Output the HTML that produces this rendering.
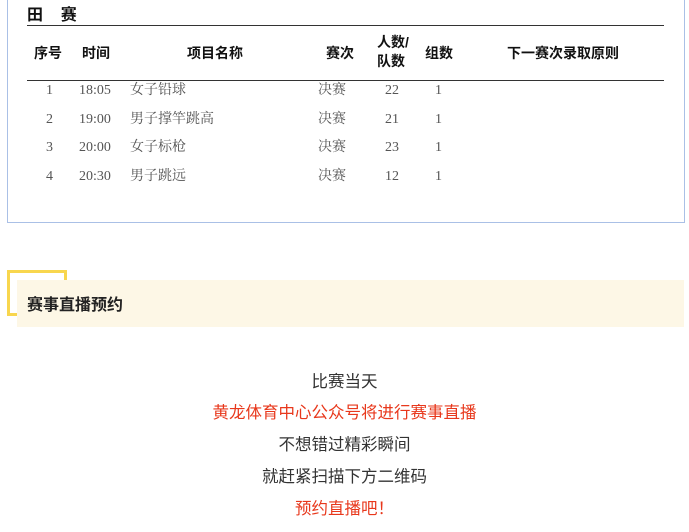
<!DOCTYPE html>
<html><head><meta charset="utf-8"><style>
body{margin:0;width:689px;height:532px;background:#fff;position:relative;overflow:hidden;font-family:"Liberation Serif","Noto Serif CJK SC",serif;}
.a{position:absolute;white-space:nowrap}
.box{position:absolute;left:7px;top:-2px;width:676px;height:224px;border:1px solid #aac0e6;border-top:none}
.h{font-family:"Liberation Sans","Noto Sans CJK SC",sans-serif;font-weight:bold;font-size:14px;color:#111}
.r{font-size:14px;color:#555;font-family:"Liberation Serif","Noto Serif CJK SC",serif}
.c{position:absolute;left:0;width:689px;text-align:center;font-family:"Liberation Sans","Noto Sans CJK SC",sans-serif;font-size:16.5px;color:#333}
</style></head><body>
<div class="box"></div>
<div class="a h" style="left:27px;top:1px;font-size:16px">田&nbsp;&nbsp;&nbsp;&nbsp;赛</div>
<div class="a" style="left:27px;top:25px;width:637px;height:1px;background:#333"></div>
<div class="a h" style="left:34px;top:43px">序号</div>
<div class="a h" style="left:82px;top:43px">时间</div>
<div class="a h" style="left:187px;top:43px">项目名称</div>
<div class="a h" style="left:326px;top:43px">赛次</div>
<div class="a h" style="left:377px;top:33px;line-height:19px">人数/<br>队数</div>
<div class="a h" style="left:425px;top:43px">组数</div>
<div class="a h" style="left:507px;top:43px">下一赛次录取原则</div>
<div class="a" style="left:27px;top:80px;width:637px;height:1px;background:#333"></div>
<div class="a r" style="left:46px;top:77px;line-height:28.5px">1<br>2<br>3<br>4</div>
<div class="a r" style="left:79px;top:77px;line-height:28.5px">18:05<br>19:00<br>20:00<br>20:30</div>
<div class="a r" style="left:130px;top:77px;line-height:28.5px">女子铅球<br>男子撑竿跳高<br>女子标枪<br>男子跳远</div>
<div class="a r" style="left:318px;top:77px;line-height:28.5px">决赛<br>决赛<br>决赛<br>决赛</div>
<div class="a r" style="left:385px;top:77px;line-height:28.5px">22<br>21<br>23<br>12</div>
<div class="a r" style="left:435px;top:77px;line-height:28.5px">1<br>1<br>1<br>1</div>
<div class="a" style="left:7px;top:270px;width:54px;height:40px;border:3px solid #f8d64e"></div>
<div class="a" style="left:17px;top:280px;width:667px;height:47px;background:#fdf7e6"></div>
<div class="a" style="left:27px;top:291px;font-family:'Liberation Sans','Noto Sans CJK SC',sans-serif;font-weight:bold;font-size:16px;color:#222">赛事直播预约</div>
<div class="c" style="top:368px">比赛当天</div>
<div class="c" style="top:399px;color:#e8381c">黄龙体育中心公众号将进行赛事直播</div>
<div class="c" style="top:431px">不想错过精彩瞬间</div>
<div class="c" style="top:463px">就赶紧扫描下方二维码</div>
<div class="c" style="top:495px;color:#e8381c">预约直播吧！</div>
</body></html>
